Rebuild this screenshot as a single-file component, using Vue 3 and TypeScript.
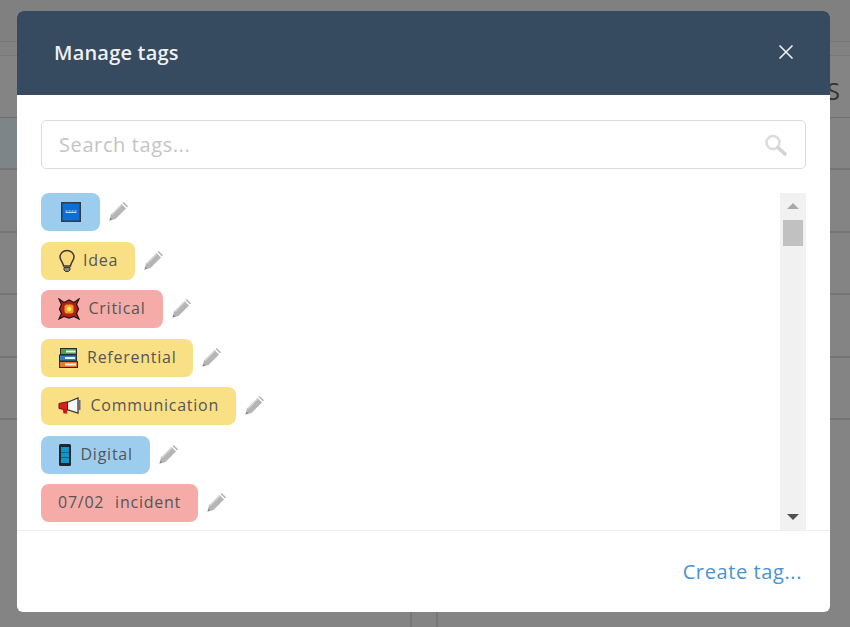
<template>
  <div class="page">
    <!-- page behind the dialog -->
    <div class="bg-top"></div>
    <div class="bg-title"><span class="bg-letter">S</span></div>
    <div class="bg-head"></div>
    <div v-for="n in 4" :key="n" class="bg-row"></div>
    <div class="bg-rest"><i></i><i></i></div>

    <div class="overlay">
      <div class="modal">
        <div class="modal-header">
          <span class="modal-title">Manage tags</span>
          <svg class="close" width="16" height="16" viewBox="0 0 16 16">
            <path d="M1.500 1.500 14.500 14.500M14.500 1.500 1.500 14.500" stroke="#e9edf0" stroke-width="1.700" fill="none" />
          </svg>
        </div>

        <div class="modal-body">
          <div class="search">
            <span class="placeholder">Search tags...</span>
            <svg width="24" height="24" viewBox="0 0 24 24">
              <circle cx="10" cy="9.500" r="6.500" fill="none" stroke="#dcdcdc" stroke-width="2.600" />
              <path d="M15 14.500 22 21" stroke="#d4d4d4" stroke-width="3.600" stroke-linecap="round" />
            </svg>
          </div>

          <div class="list-wrap">
            <div class="tag-list">
              <div v-for="tag in tags" :key="tag.id" class="tag-row">
                <div class="tag" :class="tag.color">
                  <svg v-if="tag.icon === 'news'" class="icon icon-news" width="22" height="22" viewBox="0 0 22 22">
                    <rect x="1" y="1" width="20" height="20" fill="#333a40" />
                    <rect x="2.500" y="2.500" width="17" height="17" fill="#0a6fd6" />
                    <path d="M5.500 10h2M8.500 10h2M11.500 10h2M14.500 10h2M5.500 11.500h11" stroke="#bcd9f2" stroke-width="1.200" />
                  </svg>
                  <svg v-else-if="tag.icon === 'bulb'" class="icon" width="18" height="24" viewBox="0 0 18 24">
                    <path d="M9 1.500C4.800 1.500 2 4.500 2 8c0 3.500 3 5 3.500 9h7c.5-4 3.500-5.500 3.500-9 0-3.500-2.800-6.500-7-6.500z" fill="#f9d77c" stroke="#3d3a30" stroke-width="1.500" />
                    <path d="M6 18.500h6v2.500l-1.500 1.500h-3L6 21z" fill="#8a8a80" stroke="#3d3a30" stroke-width="1" />
                  </svg>
                  <svg v-else-if="tag.icon === 'boom'" class="icon icon-wide" width="22" height="22" viewBox="0 0 22 22">
                    <path d="M1 1l5 3.500L11 2l5 2.500L21 1l-2.500 5.500L20.500 11l-2 4.500L21 21l-5-2.500L11 20l-5-1.500L1 21l2.500-5.500L1.500 11l2-4.500z" fill="#b3201c" stroke="#2a1512" stroke-width="1.300" />
                    <rect x="6.500" y="6.500" width="9" height="9" rx="2.500" fill="#f59a23" />
                    <rect x="8.800" y="8.800" width="4.400" height="4.400" rx="1.500" fill="#fbe96a" />
                  </svg>
                  <svg v-else-if="tag.icon === 'books'" class="icon" width="22" height="22" viewBox="0 0 22 22">
                    <rect x="2.500" y="1.500" width="16" height="6" fill="#4d9e55" stroke="#2b2b2b" />
                    <rect x="8" y="3.500" width="9.500" height="2" fill="#e8efe4" />
                    <rect x="1.500" y="8" width="17" height="6" fill="#2f7fc4" stroke="#2b2b2b" />
                    <rect x="7" y="10" width="10" height="2" fill="#e8efe4" />
                    <rect x="1.500" y="14.500" width="18" height="6" fill="#e47a28" stroke="#2b2b2b" />
                    <rect x="7" y="16.500" width="11" height="2" fill="#f3eee4" />
                  </svg>
                  <svg v-else-if="tag.icon === 'horn'" class="icon icon-wide" width="24" height="20" viewBox="0 0 24 20">
                    <path d="M9 6.500 20 2v15L9 13.500z" fill="#f6f6f4" stroke="#3a3a3a" stroke-width="1.300" />
                    <path d="M1 7.500 9.500 5.800v8.400L1 12.500z" fill="#dc1f1a" stroke="#6a1512" />
                    <path d="M4.500 13h4l1 4.500h-4z" fill="#c21c18" />
                    <rect x="20" y="4" width="2.500" height="10" fill="#6d6d6d" />
                  </svg>
                  <svg v-else-if="tag.icon === 'phone'" class="icon icon-wide" width="14" height="24" viewBox="0 0 14 24">
                    <rect x="1" y="1" width="12" height="22" rx="1.500" fill="#20262b" />
                    <rect x="3" y="4" width="8" height="16" fill="#0f97c7" />
                    <rect x="3" y="9" width="8" height="1" fill="#0a5f85" />
                    <rect x="3" y="14" width="8" height="1" fill="#0a5f85" />
                  </svg>
                  <span v-if="tag.label" class="tag-label">{{ tag.label }}</span>
                </div>
                <svg class="pencil" width="22" height="22" viewBox="0 0 22 22">
                  <path d="M2.500 19.500 4 13.500 14.500 3l4.500 4.500L8.500 18z" fill="#b5b5b5" />
                  <path d="M15.500 2l1.300-1 4.200 4.200-1 1.300z" fill="#b5b5b5" />
                  <path d="M5 13.500 14.500 4" stroke="#d8d8d8" stroke-width="1.200" />
                  <path d="M2.500 19.500 3.300 16.500 5.500 18.700z" fill="#8a8a8a" />
                </svg>
              </div>
            </div>

            <div class="scrollbar">
              <span class="arrow up"></span>
              <span class="thumb"></span>
              <span class="arrow down"></span>
            </div>
          </div>
        </div>

        <div class="modal-footer">
          <a class="create">Create tag...</a>
        </div>
      </div>
    </div>
  </div>
</template>

<script setup lang="ts">
interface Tag {
  id: number
  label: string
  color: string
  icon: string
}

const tags: Tag[] = [
  { id: 1, label: '', color: 'blue', icon: 'news' },
  { id: 2, label: 'Idea', color: 'yellow', icon: 'bulb' },
  { id: 3, label: 'Critical', color: 'red', icon: 'boom' },
  { id: 4, label: 'Referential', color: 'yellow', icon: 'books' },
  { id: 5, label: 'Communication', color: 'yellow', icon: 'horn' },
  { id: 6, label: 'Digital', color: 'blue', icon: 'phone' },
  { id: 7, label: '07/02 incident', color: 'red', icon: '' }
]
</script>

<style>
html,
body {
  margin: 0;
  overflow: hidden;
}
</style>

<style scoped>
.page {
  position: relative;
  width: 850px;
  height: 627px;
  background: #848484;
  overflow: hidden;
  font-family: 'Open Sans', 'Noto Sans', sans-serif;
}

.bg-top {
  height: 42px;
  background: #808080;
  border-bottom: 1px solid #777;
  box-sizing: border-box;
}

.bg-title {
  height: 76px;
  border-top: 13px solid #828282;
  border-bottom: 1px solid #6f6f6f;
  box-sizing: border-box;
  box-shadow: inset 0 1px 0 #777;
  display: flex;
  justify-content: flex-end;
  align-items: center;
}

.bg-letter {
  font-size: 24px;
  color: #333;
  margin-right: 10px;
  margin-top: 8px;
}

.bg-head {
  height: 52px;
  background: linear-gradient(to right, #7d8589 400px, #848484 400px);
  border-bottom: 2px solid #747474;
  box-sizing: border-box;
}

.bg-row {
  height: 62.500px;
  box-sizing: border-box;
  border-bottom: 2px solid #747474;
}

.bg-rest {
  height: 207px;
  display: flex;
}

.bg-rest i {
  width: 2px;
  height: 100%;
  background: #777;
  margin-left: 24px;
}

.bg-rest i:first-child {
  margin-left: 410px;
}

.overlay {
  position: absolute;
  inset: 0;
  padding: 11px 20px 0 17px;
}

.modal {
  width: 813px;
  height: 601px;
  background: #fff;
  border-radius: 6px;
  overflow: hidden;
  display: flex;
  flex-direction: column;
}

.modal-header {
  height: 84px;
  flex: none;
  background: #364a60;
  display: flex;
  align-items: center;
  justify-content: space-between;
  padding: 0 36px 2px 37px;
  box-sizing: border-box;
}

.modal-title {
  color: #eef1f3;
  font-size: 20px;
  font-weight: 600;
  letter-spacing: 0.2px;
}

.close {
  display: block;
}

.modal-body {
  flex: 1;
  min-height: 0;
  padding: 25px 24px 0;
  display: flex;
  flex-direction: column;
}

.search {
  height: 49px;
  flex: none;
  box-sizing: border-box;
  border: 1px solid #dcdcdc;
  border-radius: 5px;
  display: flex;
  align-items: center;
  justify-content: space-between;
  padding: 0 18px 0 17px;
}

.placeholder {
  color: #c4c4c4;
  font-size: 20px;
  letter-spacing: 0.6px;
}

.list-wrap {
  flex: 1;
  min-height: 0;
  margin-top: 24px;
  display: flex;
  justify-content: space-between;
}

.tag-list {
  overflow: hidden;
}

.tag-row {
  display: flex;
  align-items: center;
  gap: 7px;
  margin-bottom: 10.500px;
}

.tag {
  height: 38px;
  box-sizing: border-box;
  padding: 0 17px;
  border-radius: 8px;
  display: flex;
  align-items: center;
  gap: 7px;
  color: #555;
  font-size: 16px;
  letter-spacing: 0.75px;
  word-spacing: 6px;
  white-space: nowrap;
}

.tag-label {
  margin-bottom: 2px;
}

.blue {
  background: #9dcdee;
}

.yellow {
  background: #fae085;
}

.red {
  background: #f5aca8;
}

.icon {
  display: block;
  flex: none;
}

.icon-wide {
  margin-right: 1.500px;
}

.icon-news {
  margin: 0 1.500px;
}

.pencil {
  display: block;
  flex: none;
}

.scrollbar {
  width: 26px;
  flex: none;
  background: #f1f1f1;
  display: flex;
  flex-direction: column;
  align-items: center;
  position: relative;
}

.arrow {
  position: absolute;
  width: 0;
  height: 0;
  border-left: 6px solid transparent;
  border-right: 6px solid transparent;
}

.arrow.up {
  top: 10px;
  border-bottom: 6px solid #a9a9a9;
}

.arrow.down {
  bottom: 10px;
  border-top: 6px solid #505050;
}

.thumb {
  width: 20px;
  height: 26px;
  margin-top: 27px;
  background: #c1c1c1;
}

.modal-footer {
  height: 82px;
  flex: none;
  box-sizing: border-box;
  border-top: 1px solid #eee;
  display: flex;
  align-items: center;
  justify-content: flex-end;
  padding: 0 28px 0 0;
}

.create {
  color: #4a93cf;
  font-size: 20px;
  letter-spacing: 0.6px;
}
</style>
